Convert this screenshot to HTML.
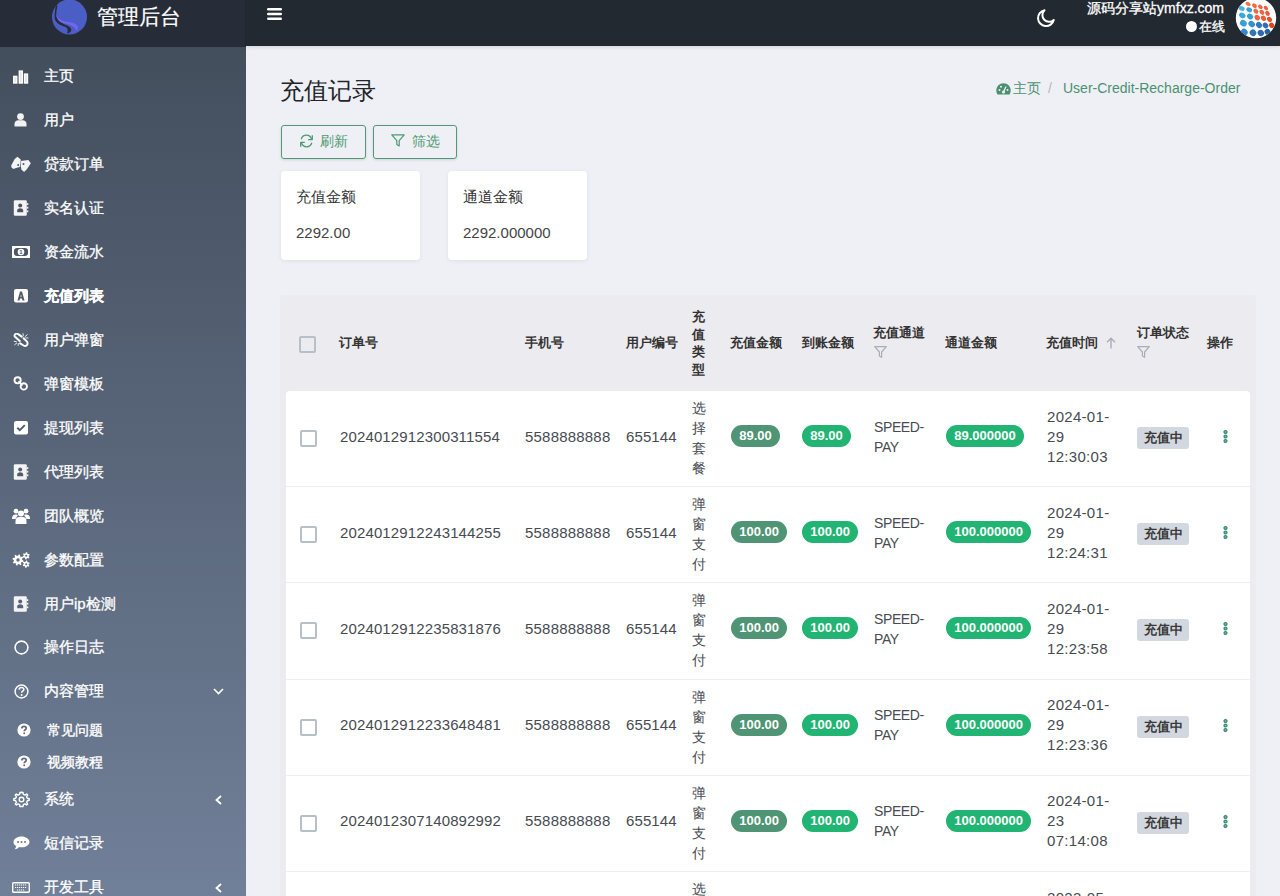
<!DOCTYPE html>
<html><head><meta charset="utf-8">
<style>
*{box-sizing:border-box;margin:0;padding:0}
html,body{width:1280px;height:896px;overflow:hidden}
body{font-family:"Liberation Sans",sans-serif;background:#eff0f5;position:relative;color:#212529}
.brand{position:absolute;left:0;top:0;width:246px;height:47px;background:#272d38;border-right:1px solid #20262e;z-index:2}
.navbar{position:absolute;left:246px;top:0;width:1034px;height:46px;background:#222930;box-shadow:0 1px 4px rgba(0,0,0,.12);z-index:1}
.sidebar{position:absolute;z-index:1;left:0;top:46px;width:246px;height:850px;background:linear-gradient(#434e5d,#718099)}
.abs{position:absolute}
.brand-title{position:absolute;left:97px;top:3px;font-size:21px;line-height:28px;color:#fff;-webkit-text-stroke:0.2px #fff}
.mi{position:absolute;z-index:3;left:0;width:246px;height:44px;color:#fff}
.mi .ic{position:absolute;left:11px;top:0;width:20px;height:44px;display:flex;align-items:center;justify-content:center}
.mi .tx{position:absolute;left:44px;top:0px;line-height:44px;font-size:15px;-webkit-text-stroke:0.3px #fff;white-space:nowrap}
.mi.sub{height:32px}
.mi.sub .tx{left:47px;line-height:32px;font-size:14px;top:1px;-webkit-text-stroke:0.35px #fff}
.mi.sub .ic{left:14px;height:32px;top:0.5px}
.title{position:absolute;left:280px;top:75px;font-size:24px;line-height:32px;color:#212529}
.bc{position:absolute;top:80px;font-size:14px;line-height:16px;color:#4b9070;white-space:nowrap}
.btn{position:absolute;top:125px;height:34px;border:1px solid #4e9a72;border-radius:3px;box-shadow:0 1px 3px rgba(0,0,0,.12);color:#4e9a72;font-size:14px}
.btn .t{position:absolute;top:7px;line-height:17px}
.card{position:absolute;top:171px;width:139px;height:89px;background:#fff;border-radius:4px;box-shadow:0 1px 4px rgba(0,0,0,.07)}
.card .l{position:absolute;left:15px;top:16px;font-size:15px;line-height:20px;color:#333}
.card .v{position:absolute;left:15px;top:52px;font-size:15px;line-height:20px;color:#444}
.tbl{position:absolute;left:280px;top:295px;width:976px;height:601px;background:#ecebf0;border-radius:4px 4px 0 0}
.th{position:absolute;font-size:13px;font-weight:bold;color:#333;line-height:17.5px;white-space:nowrap}
.row{position:absolute;left:286px;width:964px;height:96px;background:#fff;border-bottom:1px solid #eceef3}
.row.first{border-radius:4px 4px 0 0}
.cb{position:absolute;width:17px;height:17px;border:2px solid #b7c0c9;border-radius:2px;background:#fff}
.td{position:absolute;font-size:15px;color:#464b52;line-height:20px;white-space:nowrap}
.badge{position:absolute;height:22px;padding:0 8.2px;border-radius:11px;color:#fff;font-size:13px;font-weight:bold;line-height:22px;text-align:center}
.bg1{background:#4f9474}
.bg2{background:#21b472}
.st{position:absolute;width:52px;height:22px;border-radius:3px;background:#d3d7df;color:#3a3a3a;font-size:13px;font-weight:bold;line-height:22px;text-align:center}
</style></head><body>
<div class="brand">
  <svg class="abs" style="left:51px;top:-1px" width="37" height="37" viewBox="0 0 37 37">
    <circle cx="18.5" cy="18" r="17.5" fill="#4b5ec6"/>
    <path d="M5.9 5.5 C4 8.5 3.6 13 3.7 18.9 C3.8 20.5 4.6 22 5.9 23.3 C7 24.6 8 25.4 9.5 26 C11 26.8 12.5 27.2 14 27.8 C15 28.3 16 28.9 16.2 29.6 C16.6 30.5 16.8 31.4 16.6 32.25 C16.5 33 16.4 33.8 16.2 34.5 L18 34 C18.9 33.5 19.6 33 19.8 32.25 C20.2 31.5 20.4 30.8 20.2 30 C19.8 29 19 28.3 18.4 27.8 C17.4 27 16.2 26.5 14.9 26 C13.2 25.3 11.4 24.5 10 23.3 C8.3 22 7.2 20.6 6.4 18.9 C5.6 17.4 5.2 16 5.3 14.4 C5.4 12 5.9 9.5 6.4 7.7 Z" fill="#262c38"/>
    <path d="M5.3 15.3 C6 17.4 7 18.8 8.2 19.75 C9.5 20.8 11 21.5 12.6 22 C15 22.7 17 22.9 19.3 23.3 C21 23.6 22.6 24.1 23.8 24.7 C25 25.3 26 26 26.5 26.9 C27 27.7 27.1 28.7 26.9 29.6 C26.6 30.6 25.8 31.6 24.7 32.25 C25.1 31.7 25.1 31.4 24.9 31.4 C25.1 30.4 24.7 29.5 23.8 28.7 C22.8 27.6 21.5 26.9 20.2 26.4 C18.4 25.7 16.6 25.3 14.9 24.7 C12.4 24 10.3 23.4 8.6 22.4 C7 21.3 5.8 19.3 5.3 17.1 Z" fill="#7565ee"/>
  </svg>
  <div class="brand-title">管理后台</div>
</div>
<div class="navbar">
  <svg class="abs" style="left:20px;top:7px" width="17" height="14" viewBox="0 0 17 14">
    <rect x="1" y="1" width="15" height="2.6" rx="1.3" fill="#fff"/>
    <rect x="1" y="5.7" width="15" height="2.6" rx="1.3" fill="#fff"/>
    <rect x="1" y="10.4" width="15" height="2.6" rx="1.3" fill="#fff"/>
  </svg>
  <svg class="abs" style="left:790px;top:8px" width="20" height="20" viewBox="0 0 20 20">
    <path d="M8.5 2.2 A8 8 0 1 0 17.8 12 A6.3 6.3 0 0 1 8.5 2.2 Z" fill="none" stroke="#fff" stroke-width="2" stroke-linejoin="round"/>
  </svg>
  <div class="abs" style="right:56px;top:0px;font-size:14px;-webkit-text-stroke:0.3px #fff;line-height:17px;color:#fff;white-space:nowrap">源码分享站ymfxz.com</div>
  <div class="abs" style="right:55px;top:19px;font-size:12.5px;-webkit-text-stroke:0.3px #fff;line-height:17px;color:#fff;white-space:nowrap"><span style="display:inline-block;width:11px;height:11px;border-radius:50%;background:#fff;vertical-align:-1px;margin-right:2px"></span>在线</div>
  <svg class="abs" style="left:989px;top:-2px" width="42" height="42" viewBox="0 0 42 42"><defs><clipPath id="av"><circle cx="21" cy="20" r="20.2"/></clipPath></defs><circle cx="21" cy="20" r="20.2" fill="#fff"/><g clip-path="url(#av)"><ellipse cx="13.1" cy="6" rx="2.8" ry="1.9" transform="rotate(35 13.1 6)" fill="#ef7248"/><ellipse cx="19.5" cy="7.7" rx="2.7" ry="1.9" transform="rotate(40 19.5 7.7)" fill="#ee6a42"/><ellipse cx="25.4" cy="8.9" rx="2.6" ry="1.9" transform="rotate(40 25.4 8.9)" fill="#ee6440"/><ellipse cx="30.9" cy="10" rx="2.5" ry="1.8" transform="rotate(45 30.9 10)" fill="#ed5f3c"/><ellipse cx="6.8" cy="10.5" rx="3.0" ry="2.3" transform="rotate(25 6.8 10.5)" fill="#4ab0e6"/><ellipse cx="14.2" cy="11.8" rx="3.0" ry="2.3" transform="rotate(30 14.2 11.8)" fill="#36a2dc"/><ellipse cx="20.9" cy="13.2" rx="2.8" ry="2.1" transform="rotate(45 20.9 13.2)" fill="#ef6a42"/><ellipse cx="26.9" cy="14.3" rx="2.8" ry="2.1" transform="rotate(45 26.9 14.3)" fill="#ee6440"/><ellipse cx="32.5" cy="15.4" rx="2.7" ry="2.0" transform="rotate(50 32.5 15.4)" fill="#ec5a38"/><ellipse cx="7.3" cy="17.4" rx="3.3" ry="2.6" transform="rotate(30 7.3 17.4)" fill="#3aa6df"/><ellipse cx="15.1" cy="18.5" rx="3.2" ry="2.6" transform="rotate(35 15.1 18.5)" fill="#32a0da"/><ellipse cx="22.2" cy="19.6" rx="3.0" ry="2.4" transform="rotate(50 22.2 19.6)" fill="#ee6440"/><ellipse cx="28.5" cy="20.3" rx="2.9" ry="2.3" transform="rotate(50 28.5 20.3)" fill="#ec5a36"/><ellipse cx="34.5" cy="21.4" rx="2.8" ry="2.2" transform="rotate(50 34.5 21.4)" fill="#e94b2c"/><ellipse cx="8.4" cy="25.2" rx="3.6" ry="3.0" transform="rotate(35 8.4 25.2)" fill="#379fdc"/><ellipse cx="16.7" cy="26.1" rx="3.5" ry="2.9" transform="rotate(40 16.7 26.1)" fill="#348fd0"/><ellipse cx="24" cy="27" rx="3.3" ry="2.7" transform="rotate(45 24 27)" fill="#2f78bb"/><ellipse cx="30.5" cy="27.4" rx="3.1" ry="2.5" transform="rotate(45 30.5 27.4)" fill="#2d6db2"/><ellipse cx="36.7" cy="27.4" rx="2.9" ry="2.4" transform="rotate(50 36.7 27.4)" fill="#e8401e"/><ellipse cx="9.3" cy="34.1" rx="3.5" ry="3.2" transform="rotate(40 9.3 34.1)" fill="#3386c8"/><ellipse cx="18" cy="34.8" rx="3.4" ry="3.2" transform="rotate(50 18 34.8)" fill="#2f76b9"/><ellipse cx="25.8" cy="35" rx="3.3" ry="3.0" transform="rotate(50 25.8 35)" fill="#2c68ad"/><ellipse cx="32.5" cy="33.9" rx="3.0" ry="2.8" transform="rotate(50 32.5 33.9)" fill="#2b5fa4"/></g></svg>
</div>

<div class="sidebar" id="sb"></div>
<div id="menu">
  <div class="mi" style="top:54px"><div class="ic"><svg width="16" height="15" viewBox="0 0 16 15"><rect x="0.75" y="7.4" width="3" height="6.6" fill="#e3e6ea" stroke="#fff" stroke-width="1.4"/><rect x="6.3" y="2.1" width="3" height="11.9" fill="#e3e6ea" stroke="#fff" stroke-width="1.4"/><rect x="11.5" y="5.1" width="3" height="8.9" fill="#e3e6ea" stroke="#fff" stroke-width="1.4"/></svg></div><div class="tx">主页</div></div>
  <div class="mi" style="top:98px"><div class="ic"><svg style="margin-left:-2px" width="13" height="14" viewBox="0 0 13 14"><circle cx="6.5" cy="3.6" r="3.4" fill="#f2f2f2"/><path d="M0.5 13.5 V11 C0.5 8.5 2.5 7.3 4 7.3 H9 C10.5 7.3 12.5 8.5 12.5 11 V13.5Z" fill="#f2f2f2"/></svg></div><div class="tx">用户</div></div>
  <div class="mi" style="top:142px"><div class="ic"><svg width="20" height="16" viewBox="0 0 20 16"><path d="M0.2 9.4 L3.7 3 L6.4 0.8 L8.3 2.2 L9.9 3.8 L9.6 7.3 L8.8 11 L5 12.1 L2.4 12.9 L0.5 11.5Z" fill="#f4f4f4"/><path d="M9.9 5.1 L17.4 4 L19.8 7.3 L18.4 9.4 L15.8 13.2 L13.1 16 L10.4 13.4 L9.9 10.5Z" fill="#f4f4f4"/><circle cx="7.2" cy="9.1" r="1" fill="#4a5565"/><circle cx="12.5" cy="8.1" r="1" fill="#4a5565"/><path d="M9.8 4.5 L9.4 11" stroke="#8a929e" stroke-width="0.6"/></svg></div><div class="tx">贷款订单</div></div>
  <div class="mi" style="top:186px"><div class="ic"><svg width="16" height="16" viewBox="0 0 16 16"><rect x="0.8" y="0.3" width="13" height="15.4" rx="1.3" fill="#f4f4f4"/><rect x="13.8" y="3.2" width="1.5" height="1.8" fill="#f4f4f4"/><rect x="13.8" y="6.8" width="1.5" height="1.8" fill="#f4f4f4"/><rect x="13.8" y="10.4" width="1.5" height="1.8" fill="#f4f4f4"/><circle cx="7.2" cy="5.6" r="2" fill="#4a5464"/><path d="M4.2 12.2 V10.6 C4.2 9.2 5.3 8.3 7.2 8.3 C9.1 8.3 10.2 9.2 10.2 10.6 V12.2Z" fill="#4a5464"/></svg></div><div class="tx">实名认证</div></div>
  <div class="mi" style="top:230px"><div class="ic"><svg width="18" height="12" viewBox="0 0 18 12"><rect x="0" y="0" width="18" height="12" fill="#fff"/><rect x="2" y="2" width="14" height="8" rx="3" fill="#4c5667"/><circle cx="9" cy="6" r="3.3" fill="#fff"/><text x="9" y="8.3" font-size="6" text-anchor="middle" font-weight="bold" fill="#4c5667" font-family="Liberation Sans">1</text></svg></div><div class="tx">资金流水</div></div>
  <div class="mi" style="top:274px"><div class="ic"><svg width="14" height="14" viewBox="0 0 14 14"><rect x="0" y="0" width="14" height="13.5" rx="2" fill="#fff"/><path d="M3.5 11.5 L6 2.5 H8 L10.5 11.5 H8.5 L8 9.5 H6 L5.5 11.5Z M6.4 7.8 H7.6 L7 5.2Z" fill="#4f5a6b"/></svg></div><div class="tx" style="font-weight:bold">充值列表</div></div>
  <div class="mi" style="top:318px"><div class="ic"><svg width="16" height="15" viewBox="0 0 16 15"><path d="M6.7 8 L2 3.8 C1.2 3 1.5 1.6 2.5 1 C3.5 0.4 4.5 0.6 5.2 1.1 L8.7 3.6" fill="none" stroke="#fff" stroke-width="2" stroke-linecap="round"/><path d="M10.6 5.2 L14 8.6 C14.8 9.5 14.8 11.5 13.8 12.3 C12.8 13.1 11.3 13 10.6 12.5 L7.1 10.3" fill="none" stroke="#fff" stroke-width="2" stroke-linecap="round"/><path d="M10 0.3 L10.3 3.2 M14.5 1.5 L11.8 3.8 M15.4 5 L12.4 4.9 M0.8 8.2 L3.8 8.8 M1.3 12 L4 9.8 M5.2 12.8 L5.3 10" stroke="#e8eaee" stroke-width="1"/></svg></div><div class="tx">用户弹窗</div></div>
  <div class="mi" style="top:362px"><div class="ic"><svg width="16" height="16" viewBox="0 0 16 16"><circle cx="4.6" cy="4.3" r="3.1" fill="none" stroke="#fff" stroke-width="1.9"/><circle cx="10.8" cy="10.4" r="3.2" fill="none" stroke="#fff" stroke-width="1.9"/><path d="M5.5 5.3 L9.6 9.4" stroke="#fff" stroke-width="1.6"/></svg></div><div class="tx">弹窗模板</div></div>
  <div class="mi" style="top:406px"><div class="ic"><svg width="14" height="14" viewBox="0 0 14 14"><rect x="0" y="0" width="14" height="13.5" rx="2" fill="#fff"/><path d="M3.3 6.8 L5.8 9.2 L10.8 4.2" fill="none" stroke="#505b6c" stroke-width="1.9"/></svg></div><div class="tx">提现列表</div></div>
  <div class="mi" style="top:450px"><div class="ic"><svg width="16" height="16" viewBox="0 0 16 16"><rect x="0.8" y="0.3" width="13" height="15.4" rx="1.3" fill="#f4f4f4"/><rect x="13.8" y="3.2" width="1.5" height="1.8" fill="#f4f4f4"/><rect x="13.8" y="6.8" width="1.5" height="1.8" fill="#f4f4f4"/><rect x="13.8" y="10.4" width="1.5" height="1.8" fill="#f4f4f4"/><circle cx="7.2" cy="5.6" r="2" fill="#525c6d"/><path d="M4.2 12.2 V10.6 C4.2 9.2 5.3 8.3 7.2 8.3 C9.1 8.3 10.2 9.2 10.2 10.6 V12.2Z" fill="#525c6d"/></svg></div><div class="tx">代理列表</div></div>
  <div class="mi" style="top:494px"><div class="ic"><svg width="18" height="16" viewBox="0 0 18 16"><circle cx="4" cy="3.2" r="2.4" fill="#fff"/><circle cx="14" cy="3.2" r="2.4" fill="#fff"/><circle cx="9" cy="5.5" r="3" fill="#fff"/><path d="M0 11 C0 7.5 1.5 6.5 4 6.5 C5.5 6.5 6 7 6 7 L3.5 11Z" fill="#fff"/><path d="M18 11 C18 7.5 16.5 6.5 14 6.5 C12.5 6.5 12 7 12 7 L14.5 11Z" fill="#fff"/><path d="M3.5 16 V13 C3.5 10 5.5 9 7 9 H11 C12.5 9 14.5 10 14.5 13 V16Z" fill="#fff"/></svg></div><div class="tx">团队概览</div></div>
  <div class="mi" style="top:538px"><div class="ic"><svg width="18" height="16" viewBox="0 0 18 16"><path fill-rule="evenodd" fill="#fff" d="M10.20 8.00 L11.56 8.66 L11.17 10.14 L9.66 10.05 L8.97 10.97 L9.47 12.40 L8.14 13.17 L7.14 12.04 L6.00 12.20 L5.34 13.56 L3.86 13.17 L3.95 11.66 L3.03 10.97 L1.60 11.47 L0.83 10.14 L1.96 9.14 L1.80 8.00 L0.44 7.34 L0.83 5.86 L2.34 5.95 L3.03 5.03 L2.53 3.60 L3.86 2.83 L4.86 3.96 L6.00 3.80 L6.66 2.44 L8.14 2.83 L8.05 4.34 L8.97 5.03 L10.40 4.53 L11.17 5.86 L10.04 6.86Z M7.70 8.00 A1.7 1.7 0 1 0 4.30 8.00 A1.7 1.7 0 1 0 7.70 8.00Z M16.68 4.57 L17.43 5.39 L16.65 6.44 L15.65 5.96 L14.78 6.34 L14.44 7.39 L13.14 7.24 L13.05 6.13 L12.29 5.57 L11.21 5.80 L10.69 4.60 L11.61 3.97 L11.72 3.03 L10.97 2.21 L11.75 1.16 L12.75 1.64 L13.62 1.26 L13.96 0.21 L15.26 0.36 L15.35 1.47 L16.11 2.03 L17.19 1.80 L17.71 3.00 L16.79 3.63Z M15.20 3.80 A1.0 1.0 0 1 0 13.20 3.80 A1.0 1.0 0 1 0 15.20 3.80Z M16.68 12.97 L17.43 13.79 L16.65 14.84 L15.65 14.36 L14.78 14.74 L14.44 15.79 L13.14 15.64 L13.05 14.53 L12.29 13.97 L11.21 14.20 L10.69 13.00 L11.61 12.37 L11.72 11.43 L10.97 10.61 L11.75 9.56 L12.75 10.04 L13.62 9.66 L13.96 8.61 L15.26 8.76 L15.35 9.87 L16.11 10.43 L17.19 10.20 L17.71 11.40 L16.79 12.03Z M15.20 12.20 A1.0 1.0 0 1 0 13.20 12.20 A1.0 1.0 0 1 0 15.20 12.20Z"/></svg></div><div class="tx">参数配置</div></div>
  <div class="mi" style="top:582px"><div class="ic"><svg width="16" height="16" viewBox="0 0 16 16"><rect x="0.8" y="0.3" width="13" height="15.4" rx="1.3" fill="#f4f4f4"/><rect x="13.8" y="3.2" width="1.5" height="1.8" fill="#f4f4f4"/><rect x="13.8" y="6.8" width="1.5" height="1.8" fill="#f4f4f4"/><rect x="13.8" y="10.4" width="1.5" height="1.8" fill="#f4f4f4"/><circle cx="7.2" cy="5.6" r="2" fill="#58637a"/><path d="M4.2 12.2 V10.6 C4.2 9.2 5.3 8.3 7.2 8.3 C9.1 8.3 10.2 9.2 10.2 10.6 V12.2Z" fill="#58637a"/></svg></div><div class="tx">用户ip检测</div></div>
  <div class="mi" style="top:625px"><div class="ic"><svg width="15" height="15" viewBox="0 0 15 15"><circle cx="7.5" cy="7.5" r="6.4" fill="none" stroke="#fff" stroke-width="1.6"/></svg></div><div class="tx">操作日志</div></div>
  <div class="mi" style="top:669px"><div class="ic"><svg width="15" height="15" viewBox="0 0 15 15"><circle cx="7.5" cy="7.5" r="6.4" fill="none" stroke="#fff" stroke-width="1.5"/><path d="M5.2 5.8 C5.2 4.3 6.2 3.6 7.5 3.6 C8.9 3.6 9.8 4.4 9.8 5.6 C9.8 7.2 7.6 7.2 7.6 8.8" fill="none" stroke="#fff" stroke-width="1.5"/><circle cx="7.6" cy="11" r="0.95" fill="#fff"/></svg></div><div class="tx">内容管理</div>
    <svg class="abs" style="left:213px;top:19px" width="11" height="7" viewBox="0 0 11 7"><path d="M1 1 L5.5 5.5 L10 1" fill="none" stroke="#fff" stroke-width="1.6"/></svg></div>
  <div class="mi sub" style="top:713px"><div class="ic"><svg width="14" height="14" viewBox="0 0 14 14"><circle cx="7" cy="7" r="6.6" fill="#fff"/><path d="M4.9 5.4 C4.9 4.1 5.8 3.4 7 3.4 C8.3 3.4 9.2 4.2 9.2 5.3 C9.2 6.8 7.2 6.8 7.2 8.3" fill="none" stroke="#5f6b80" stroke-width="1.7"/><circle cx="7.2" cy="10.3" r="1" fill="#5f6b80"/></svg></div><div class="tx">常见问题</div></div>
  <div class="mi sub" style="top:745px"><div class="ic"><svg width="14" height="14" viewBox="0 0 14 14"><circle cx="7" cy="7" r="6.6" fill="#fff"/><path d="M4.9 5.4 C4.9 4.1 5.8 3.4 7 3.4 C8.3 3.4 9.2 4.2 9.2 5.3 C9.2 6.8 7.2 6.8 7.2 8.3" fill="none" stroke="#616d82" stroke-width="1.7"/><circle cx="7.2" cy="10.3" r="1" fill="#616d82"/></svg></div><div class="tx">视频教程</div></div>
  <div class="mi" style="top:777px"><div class="ic"><svg width="17" height="17" viewBox="0 0 17 17"><path d="M8.5 1.2 L10 1.5 L10.4 3.4 L12 4.1 L13.6 3 L14.7 4.1 L13.6 5.7 L14.3 7.3 L16.2 7.7 V9.3 L14.3 9.7 L13.6 11.3 L14.7 12.9 L13.6 14 L12 12.9 L10.4 13.6 L10 15.5 H7 L6.6 13.6 L5 12.9 L3.4 14 L2.3 12.9 L3.4 11.3 L2.7 9.7 L0.8 9.3 V7.7 L2.7 7.3 L3.4 5.7 L2.3 4.1 L3.4 3 L5 4.1 L6.6 3.4 L7 1.5Z" fill="none" stroke="#fff" stroke-width="1.4" stroke-linejoin="round"/><circle cx="8.5" cy="8.5" r="2.3" fill="none" stroke="#fff" stroke-width="1.4"/></svg></div><div class="tx">系统</div>
    <svg class="abs" style="left:214px;top:18px" width="9" height="10" viewBox="0 0 9 10"><path d="M7 1 L2.5 5 L7 9" fill="none" stroke="#fff" stroke-width="1.8"/></svg></div>
  <div class="mi" style="top:821px"><div class="ic"><svg width="17" height="14" viewBox="0 0 17 14"><path d="M8.5 0.5 C13 0.5 16.5 3 16.5 6 C16.5 9 13 11.3 8.5 11.3 C7.6 11.3 6.8 11.2 6 11 C5 12.3 3.2 13.3 1.5 13.3 C2.5 12.3 3 11.3 3 10 C1.4 9 0.5 7.6 0.5 6 C0.5 3 4 0.5 8.5 0.5Z" fill="#fff"/><circle cx="5" cy="6" r="1" fill="#6a778c"/><circle cx="8.5" cy="6" r="1" fill="#6a778c"/><circle cx="12" cy="6" r="1" fill="#6a778c"/></svg></div><div class="tx">短信记录</div></div>
  <div class="mi" style="top:865px"><div class="ic"><svg width="18" height="11" viewBox="0 0 18 11"><rect x="0.7" y="0.7" width="16.6" height="9.6" rx="1" fill="none" stroke="#fff" stroke-width="1.4"/><path d="M3 3 H15 M3 5.5 H15 M5 8 H13" stroke="#fff" stroke-width="1.2" stroke-dasharray="1.2 0.8"/></svg></div><div class="tx">开发工具</div>
    <svg class="abs" style="left:214px;top:18px" width="9" height="10" viewBox="0 0 9 10"><path d="M7 1 L2.5 5 L7 9" fill="none" stroke="#fff" stroke-width="1.8"/></svg></div>
</div>

<div class="title">充值记录</div>
<svg class="abs" style="left:996px;top:83px" width="15" height="12" viewBox="0 0 15 12"><path d="M7.5 0.3 C11.6 0.3 14.7 3.5 14.7 7.5 C14.7 9 14.3 10.3 13.6 11.5 H1.4 C0.7 10.3 0.3 9 0.3 7.5 C0.3 3.5 3.4 0.3 7.5 0.3Z" fill="#4b9070"/><circle cx="7.5" cy="9" r="1.6" fill="#eff0f5"/><path d="M7.5 9 L10 3.5" stroke="#eff0f5" stroke-width="1.3"/><circle cx="3.5" cy="7" r="1" fill="#eff0f5"/><circle cx="5" cy="3.7" r="1" fill="#eff0f5"/><circle cx="11.5" cy="7" r="1" fill="#eff0f5"/></svg>
<div class="bc" style="left:1013px">主页</div>
<div class="bc" style="left:1048px;color:#b3b7bd">/</div>
<div class="bc" style="left:1063px">User-Credit-Recharge-Order</div>

<div class="btn" style="left:281px;width:85px">
  <svg class="abs" style="left:17px;top:8px" width="15" height="14" viewBox="0 0 15 14"><path d="M12.6 5.2 C11.8 2.8 9.8 1.2 7.4 1.2 C4.9 1.2 2.9 2.9 2.2 5.2" fill="none" stroke="#4e9a72" stroke-width="1.3"/><path d="M13.3 1.3 V5.6 H9.2" fill="none" stroke="#4e9a72" stroke-width="1.3" stroke-linejoin="round"/><path d="M2.4 8.8 C3.2 11.2 5.2 12.8 7.6 12.8 C10.1 12.8 12.1 11.1 12.8 8.8" fill="none" stroke="#4e9a72" stroke-width="1.3"/><path d="M1.7 12.7 V8.4 H5.8" fill="none" stroke="#4e9a72" stroke-width="1.3" stroke-linejoin="round"/></svg>
  <div class="t" style="left:38px">刷新</div>
</div>
<div class="btn" style="left:373px;width:84px">
  <svg class="abs" style="left:17px;top:8px" width="14" height="13" viewBox="0 0 14 13"><path d="M0.8 0.8 H13.2 L8.2 6.6 V12 L5.8 10.4 V6.6Z" fill="none" stroke="#4e9a72" stroke-width="1.2" stroke-linejoin="round"/></svg>
  <div class="t" style="left:38px">筛选</div>
</div>

<div class="card" style="left:281px"><div class="l">充值金额</div><div class="v">2292.00</div></div>
<div class="card" style="left:448px"><div class="l">通道金额</div><div class="v">2292.000000</div></div>

<div class="tbl"></div>
<div class="cb" style="left:299px;top:336px;background:transparent"></div>
<div class="th" style="left:339px;top:334px">订单号</div>
<div class="th" style="left:525px;top:334px">手机号</div>
<div class="th" style="left:626px;top:334px">用户编号</div>
<div class="th" style="left:692px;top:308px;width:14px;white-space:normal">充值类型</div>
<div class="th" style="left:730px;top:334px">充值金额</div>
<div class="th" style="left:802px;top:334px">到账金额</div>
<div class="th" style="left:873px;top:324px">充值通道</div>
<svg class="abs" style="left:874px;top:346px" width="13" height="12" viewBox="0 0 13 12"><path d="M0.7 0.7 H12.3 L7.6 6 V11.3 L5.4 10 V6Z" fill="none" stroke="#a9adb5" stroke-width="1.2" stroke-linejoin="round"/></svg>
<div class="th" style="left:945px;top:334px">通道金额</div>
<div class="th" style="left:1046px;top:334px">充值时间</div>
<svg class="abs" style="left:1106px;top:337px" width="10" height="12" viewBox="0 0 10 12"><path d="M5 11.5 V1.5 M1 5.3 L5 1.3 L9 5.3" fill="none" stroke="#a9adb5" stroke-width="1.4"/></svg>
<div class="th" style="left:1137px;top:324px">订单状态</div>
<svg class="abs" style="left:1137px;top:346px" width="13" height="12" viewBox="0 0 13 12"><path d="M0.7 0.7 H12.3 L7.6 6 V11.3 L5.4 10 V6Z" fill="none" stroke="#a9adb5" stroke-width="1.2" stroke-linejoin="round"/></svg>
<div class="th" style="left:1207px;top:334px">操作</div>

<!--ROWS-->
<div class="row first" style="top:391px;height:96px"></div>
<div class="cb" style="left:300px;top:430.0px"></div>
<div class="td" style="left:340px;top:426.5px;letter-spacing:0.13px">2024012912300311554</div>
<div class="td" style="left:525px;top:426.5px;letter-spacing:0.2px">5588888888</div>
<div class="td" style="left:626px;top:426.5px;letter-spacing:0.1px">655144</div>
<div class="td vt" style="left:692px;top:398.0px;white-space:normal;width:15px;font-size:14px">选择套餐</div>
<div class="badge bg1" style="left:731px;top:425.0px">89.00</div>
<div class="badge bg2" style="left:802px;top:425.0px">89.00</div>
<div class="td" style="left:874px;top:416.5px;font-size:14px;letter-spacing:-0.4px">SPEED-<br>PAY</div>
<div class="badge bg2" style="left:946px;top:425.0px">89.000000</div>
<div class="td" style="left:1047px;top:406.5px;letter-spacing:0.3px">2024-01-<br>29<br>12:30:03</div>
<div class="st" style="left:1137px;top:427.0px">充值中</div>
<svg class="abs" style="left:1222px;top:429.0px" width="7" height="15" viewBox="0 0 7 15"><g fill="#8fc0b2" stroke="#3a8a78" stroke-width="1.3"><circle cx="3.5" cy="3" r="1.45"/><circle cx="3.5" cy="7.5" r="1.45"/><circle cx="3.5" cy="12" r="1.45"/></g></svg>
<div class="row" style="top:487px;height:96px"></div>
<div class="cb" style="left:300px;top:526.2px"></div>
<div class="td" style="left:340px;top:522.7px;letter-spacing:0.13px">2024012912243144255</div>
<div class="td" style="left:525px;top:522.7px;letter-spacing:0.2px">5588888888</div>
<div class="td" style="left:626px;top:522.7px;letter-spacing:0.1px">655144</div>
<div class="td vt" style="left:692px;top:494.2px;white-space:normal;width:15px;font-size:14px">弹窗支付</div>
<div class="badge bg1" style="left:731px;top:521.2px">100.00</div>
<div class="badge bg2" style="left:802px;top:521.2px">100.00</div>
<div class="td" style="left:874px;top:512.7px;font-size:14px;letter-spacing:-0.4px">SPEED-<br>PAY</div>
<div class="badge bg2" style="left:946px;top:521.2px">100.000000</div>
<div class="td" style="left:1047px;top:502.7px;letter-spacing:0.3px">2024-01-<br>29<br>12:24:31</div>
<div class="st" style="left:1137px;top:523.2px">充值中</div>
<svg class="abs" style="left:1222px;top:525.2px" width="7" height="15" viewBox="0 0 7 15"><g fill="#8fc0b2" stroke="#3a8a78" stroke-width="1.3"><circle cx="3.5" cy="3" r="1.45"/><circle cx="3.5" cy="7.5" r="1.45"/><circle cx="3.5" cy="12" r="1.45"/></g></svg>
<div class="row" style="top:583px;height:97px"></div>
<div class="cb" style="left:300px;top:622.4px"></div>
<div class="td" style="left:340px;top:618.9px;letter-spacing:0.13px">2024012912235831876</div>
<div class="td" style="left:525px;top:618.9px;letter-spacing:0.2px">5588888888</div>
<div class="td" style="left:626px;top:618.9px;letter-spacing:0.1px">655144</div>
<div class="td vt" style="left:692px;top:590.4px;white-space:normal;width:15px;font-size:14px">弹窗支付</div>
<div class="badge bg1" style="left:731px;top:617.4px">100.00</div>
<div class="badge bg2" style="left:802px;top:617.4px">100.00</div>
<div class="td" style="left:874px;top:608.9px;font-size:14px;letter-spacing:-0.4px">SPEED-<br>PAY</div>
<div class="badge bg2" style="left:946px;top:617.4px">100.000000</div>
<div class="td" style="left:1047px;top:598.9px;letter-spacing:0.3px">2024-01-<br>29<br>12:23:58</div>
<div class="st" style="left:1137px;top:619.4px">充值中</div>
<svg class="abs" style="left:1222px;top:621.4px" width="7" height="15" viewBox="0 0 7 15"><g fill="#8fc0b2" stroke="#3a8a78" stroke-width="1.3"><circle cx="3.5" cy="3" r="1.45"/><circle cx="3.5" cy="7.5" r="1.45"/><circle cx="3.5" cy="12" r="1.45"/></g></svg>
<div class="row" style="top:680px;height:96px"></div>
<div class="cb" style="left:300px;top:718.6px"></div>
<div class="td" style="left:340px;top:715.1px;letter-spacing:0.13px">2024012912233648481</div>
<div class="td" style="left:525px;top:715.1px;letter-spacing:0.2px">5588888888</div>
<div class="td" style="left:626px;top:715.1px;letter-spacing:0.1px">655144</div>
<div class="td vt" style="left:692px;top:686.6px;white-space:normal;width:15px;font-size:14px">弹窗支付</div>
<div class="badge bg1" style="left:731px;top:713.6px">100.00</div>
<div class="badge bg2" style="left:802px;top:713.6px">100.00</div>
<div class="td" style="left:874px;top:705.1px;font-size:14px;letter-spacing:-0.4px">SPEED-<br>PAY</div>
<div class="badge bg2" style="left:946px;top:713.6px">100.000000</div>
<div class="td" style="left:1047px;top:695.1px;letter-spacing:0.3px">2024-01-<br>29<br>12:23:36</div>
<div class="st" style="left:1137px;top:715.6px">充值中</div>
<svg class="abs" style="left:1222px;top:717.6px" width="7" height="15" viewBox="0 0 7 15"><g fill="#8fc0b2" stroke="#3a8a78" stroke-width="1.3"><circle cx="3.5" cy="3" r="1.45"/><circle cx="3.5" cy="7.5" r="1.45"/><circle cx="3.5" cy="12" r="1.45"/></g></svg>
<div class="row" style="top:776px;height:96px"></div>
<div class="cb" style="left:300px;top:814.8px"></div>
<div class="td" style="left:340px;top:811.3px;letter-spacing:0.13px">2024012307140892992</div>
<div class="td" style="left:525px;top:811.3px;letter-spacing:0.2px">5588888888</div>
<div class="td" style="left:626px;top:811.3px;letter-spacing:0.1px">655144</div>
<div class="td vt" style="left:692px;top:782.8px;white-space:normal;width:15px;font-size:14px">弹窗支付</div>
<div class="badge bg1" style="left:731px;top:809.8px">100.00</div>
<div class="badge bg2" style="left:802px;top:809.8px">100.00</div>
<div class="td" style="left:874px;top:801.3px;font-size:14px;letter-spacing:-0.4px">SPEED-<br>PAY</div>
<div class="badge bg2" style="left:946px;top:809.8px">100.000000</div>
<div class="td" style="left:1047px;top:791.3px;letter-spacing:0.3px">2024-01-<br>23<br>07:14:08</div>
<div class="st" style="left:1137px;top:811.8px">充值中</div>
<svg class="abs" style="left:1222px;top:813.8px" width="7" height="15" viewBox="0 0 7 15"><g fill="#8fc0b2" stroke="#3a8a78" stroke-width="1.3"><circle cx="3.5" cy="3" r="1.45"/><circle cx="3.5" cy="7.5" r="1.45"/><circle cx="3.5" cy="12" r="1.45"/></g></svg>
<div class="row" style="top:872px;height:96px"></div>
<div class="cb" style="left:300px;top:911.0px"></div>
<div class="td" style="left:340px;top:907.5px;letter-spacing:0.13px">2023050000000000000</div>
<div class="td" style="left:525px;top:907.5px;letter-spacing:0.2px">5588888888</div>
<div class="td" style="left:626px;top:907.5px;letter-spacing:0.1px">655144</div>
<div class="td vt" style="left:692px;top:879.0px;white-space:normal;width:15px;font-size:14px">选择套餐</div>
<div class="badge bg1" style="left:731px;top:906.0px">100.00</div>
<div class="badge bg2" style="left:802px;top:906.0px">100.00</div>
<div class="td" style="left:874px;top:897.5px;font-size:14px;letter-spacing:-0.4px">SPEED-<br>PAY</div>
<div class="badge bg2" style="left:946px;top:906.0px">100.000000</div>
<div class="td" style="left:1047px;top:887.5px;letter-spacing:0.3px">2023-05-<br>01<br>00:00:00</div>
<div class="st" style="left:1137px;top:908.0px">充值中</div>
<svg class="abs" style="left:1222px;top:910.0px" width="7" height="15" viewBox="0 0 7 15"><g fill="#8fc0b2" stroke="#3a8a78" stroke-width="1.3"><circle cx="3.5" cy="3" r="1.45"/><circle cx="3.5" cy="7.5" r="1.45"/><circle cx="3.5" cy="12" r="1.45"/></g></svg>
<!--/ROWS-->
</body></html>
